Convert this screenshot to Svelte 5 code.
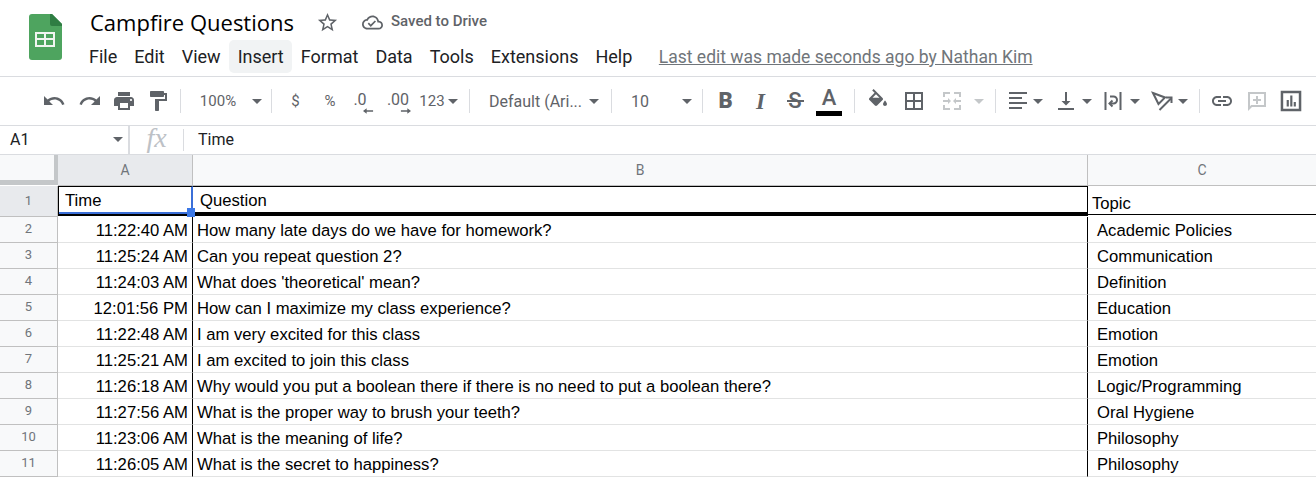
<script>
  const menus = ['File','Edit','View','Insert','Format','Data','Tools','Extensions','Help'];
  const rows = [
    ['11:22:40 AM','How many late days do we have for homework?','Academic Policies'],
    ['11:25:24 AM','Can you repeat question 2?','Communication'],
    ["11:24:03 AM","What does 'theoretical' mean?",'Definition'],
    ['12:01:56 PM','How can I maximize my class experience?','Education'],
    ['11:22:48 AM','I am very excited for this class','Emotion'],
    ['11:25:21 AM','I am excited to join this class','Emotion'],
    ['11:26:18 AM','Why would you put a boolean there if there is no need to put a boolean there?','Logic/Programming'],
    ['11:27:56 AM','What is the proper way to brush your teeth?','Oral Hygiene'],
    ['11:23:06 AM','What is the meaning of life?','Philosophy'],
    ['11:26:05 AM','What is the secret to happiness?','Philosophy']
  ];
</script>

{#snippet caret(dim = false)}
  <span class="caret" class:dim></span>
{/snippet}

<div class="page">
  <header class="top">
    <svg class="logo" viewBox="0 0 33 46" width="33" height="46">
      <path d="M3 0h20l10 10v33a3 3 0 0 1-3 3H3a3 3 0 0 1-3-3V3a3 3 0 0 1 3-3z" fill="#4ea45f"/>
      <path d="M21 0h2l10 10v2H23a2 2 0 0 1-2-2z" fill="#2f7d43"/>
      <path d="M6 18h20v15H6zm2 2v4h7v-4zm9 0v4h7v-4zM8 26v5h7v-5zm9 0v5h7v-5z" fill="#f1f5f1" fill-rule="evenodd"/>
    </svg>
    <div class="titles">
      <div class="titleline">
        <span class="title">Campfire Questions</span>
        <svg class="star" viewBox="0 0 24 24" width="23" height="23"><path fill="#5f6368" d="M22 9.240l-7.190-.62L12 2 9.190 8.630 2 9.240l5.460 4.730L5.820 21 12 17.270 18.180 21l-1.640-7.030L22 9.240zM12 15.400l-3.760 2.270 1-4.280-3.320-2.880 4.380-.38L12 6.100l1.710 4.040 4.380.38-3.320 2.880 1 4.280L12 15.400z"/></svg>
        <svg class="cloud" viewBox="0 0 24 24" width="21" height="21"><path fill="#5f6368" d="M19.350 10.040C18.670 6.590 15.640 4 12 4 9.110 4 6.600 5.640 5.350 8.040 2.340 8.360 0 10.910 0 14c0 3.310 2.690 6 6 6h13c2.760 0 5-2.240 5-5 0-2.640-2.050-4.780-4.650-4.960zM19 18H6c-2.210 0-4-1.790-4-4 0-2.050 1.530-3.760 3.560-3.970l1.070-.11.5-.95C8.080 7.140 9.940 6 12 6c2.620 0 4.880 1.860 5.390 4.430l.3 1.500 1.530.11c1.560.1 2.780 1.410 2.780 2.960 0 1.650-1.350 3-3 3zm-9-3.820l-2.090-2.090L6.500 13.500 10 17l6.010-6.010-1.410-1.410z"/></svg>
        <span class="saved">Saved to Drive</span>
      </div>
      <nav class="menu">
        {#each menus as m}
          <span class="mi" class:active={m === 'Insert'}>{m}</span>
        {/each}
        <span class="lastedit">Last edit was made seconds ago by Nathan Kim</span>
      </nav>
    </div>
  </header>

  <div class="toolbar">
    <span class="tb w36"><svg viewBox="0 0 24 24" width="24" height="24"><path d="M12.500 8c-2.650 0-5.050.99-6.900 2.600L2 7v9h9l-3.620-3.620c1.390-1.160 3.160-1.880 5.120-1.880 3.540 0 6.550 2.310 7.600 5.500l2.370-.78C21.080 11.030 17.150 8 12.500 8z"/></svg></span>
    <span class="tb w35"><svg viewBox="0 0 24 24" width="24" height="24"><path d="M18.400 10.600C16.550 8.990 14.150 8 11.500 8c-4.650 0-8.580 3.030-9.960 7.220L3.900 16c1.050-3.190 4.050-5.500 7.600-5.500 1.950 0 3.730.72 5.120 1.880L13 16h9V7l-3.600 3.600z"/></svg></span>
    <span class="tb w34"><svg viewBox="0 0 24 24" width="24" height="24"><path d="M19 8H5c-1.660 0-3 1.340-3 3v6h4v4h12v-4h4v-6c0-1.660-1.340-3-3-3zm-3 11H8v-5h8v5zm3-7c-.55 0-1-.45-1-1s.45-1 1-1 1 .45 1 1-.45 1-1 1zm-1-9H6v4h12V3z"/></svg></span>
    <span class="tb w34"><svg viewBox="0 0 24 24" width="24" height="24"><path d="M18 4V3c0-.55-.45-1-1-1H5c-.55 0-1 .45-1 1v4c0 .55.45 1 1 1h12c.55 0 1-.45 1-1V6h1v4H9v11c0 .55.45 1 1 1h2c.55 0 1-.45 1-1v-9h8V4h-3z"/></svg></span>
    <span class="sep sep-a"></span>
    <span class="tb txt zoom">100%</span>
    <span class="tb w14">{@render caret()}</span>
    <span class="sep sep-b"></span>
    <span class="tb w33 txt">$</span>
    <span class="tb w36 txt pct">%</span>
    <span class="tb w32 dec dec1">
      <span>.0</span>
      <svg viewBox="0 0 12 6" width="11" height="6"><path d="M11 2.200H4V0L0 3l4 3V3.800h7z"/></svg>
    </span>
    <span class="tb w36 dec dec2">
      <span>.00</span>
      <svg viewBox="0 0 12 6" width="11" height="6"><path d="M1 2.200h7V0l4 3-4 3V3.800H1z"/></svg>
    </span>
    <span class="tb w32 txt">123</span>
    <span class="tb w10">{@render caret()}</span>
    <span class="sep sep-c"></span>
    <span class="tb txt font">Default (Ari...</span>
    <span class="tb w26">{@render caret()}</span>
    <span class="sep sep-d"></span>
    <span class="tb txt size">10</span>
    <span class="tb w18">{@render caret()}</span>
    <span class="sep sep-e"></span>
    <span class="tb w35 glyph bold">B</span>
    <span class="tb w35 glyph ital">I</span>
    <span class="tb w34 glyph strike">S</span>
    <span class="tb w34 tcolor"><span class="glyph">A</span><i class="swatch"></i></span>
    <span class="sep sep-f"></span>
    <span class="tb w36"><svg viewBox="0 0 24 24" width="24" height="24"><path d="M16.560 8.940L7.620 0 6.210 1.410l2.380 2.380-5.150 5.150c-.59.59-.59 1.540 0 2.120l5.500 5.500c.29.29.68.44 1.060.44s.77-.15 1.060-.44l5.500-5.500c.59-.58.59-1.530 0-2.120zM19 11.500s-2 2.170-2 3.500c0 1.100.9 2 2 2s2-.9 2-2c0-1.330-2-3.500-2-3.500z"/><path fill="#fff" d="M10 5.210L6.500 8.700h7z"/></svg></span>
    <span class="tb w36"><svg viewBox="0 0 24 24" width="24" height="24"><path d="M3 3v18h18V3H3zm8 16H5v-6h6v6zm0-8H5V5h6v6zm8 8h-6v-6h6v6zm0-8h-6V5h6v6z"/></svg></span>
    <span class="tb w40"><svg viewBox="0 0 24 24" width="24" height="24" class="dimicon"><path d="M3 3h7v2H5v3H3zm11 0h7v5h-2V5h-5zM3 16h2v3h5v2H3zm16 0h2v5h-7v-2h5zM3 11h5V9l3 3-3 3v-2H3zm18 0h-5V9l-3 3 3 3v-2h5z"/></svg></span>
    <span class="tb w14">{@render caret(true)}</span>
    <span class="sep sep-g"></span>
    <span class="tb w24"><svg viewBox="0 0 24 24" width="24" height="24"><path d="M3 3h18v2H3zm0 5h13v2H3zm0 5h18v2H3zm0 5h13v2H3z"/></svg></span>
    <span class="tb w16">{@render caret()}</span>
    <span class="tb gap8 w24"><svg viewBox="0 0 24 24" width="24" height="24"><path d="M11 3h2v9h3.500L12 16.500 7.500 12H11zM4 19h16v2H4z"/></svg></span>
    <span class="tb w18">{@render caret()}</span>
    <span class="tb gap4 w24"><svg viewBox="0 0 24 24" width="24" height="24" class="strokeicon"><path d="M5.500 3v18M20.500 3v18"/><path d="M10 7.500h3.500a3.500 3.500 0 0 1 0 7H10"/><path d="M12.500 11.500L9.500 14.500l3 3"/></svg></span>
    <span class="tb gap3 w16">{@render caret()}</span>
    <span class="tb gap7 w24"><svg viewBox="0 0 24 24" width="24" height="24" class="strokeicon"><path d="M3 4l12 4.500L8.500 15z"/><path d="M9.500 21L21 9.500"/><path d="M16 8.500h5.500V14"/></svg></span>
    <span class="tb gap1 w16">{@render caret()}</span>
    <span class="sep sep-h"></span>
    <span class="tb w34"><svg viewBox="0 0 24 24" width="24" height="24"><path d="M3.900 12c0-1.710 1.390-3.100 3.100-3.100h4V7H7c-2.760 0-5 2.240-5 5s2.240 5 5 5h4v-1.900H7c-1.710 0-3.100-1.390-3.100-3.100zM8 13h8v-2H8v2zm9-6h-4v1.900h4c1.710 0 3.100 1.390 3.100 3.100s-1.390 3.100-3.100 3.100h-4V17h4c2.760 0 5-2.240 5-5s-2.240-5-5-5z"/></svg></span>
    <span class="tb w35"><svg viewBox="0 0 24 24" width="24" height="24" class="dimicon"><path d="M3 3h18v15H7l-4 4zm2 2v12.200L6.200 16H19V5zm6 2h2v3h3v2h-3v3h-2v-3H8v-2h3z"/></svg></span>
    <span class="tb w34"><svg viewBox="0 0 24 24" width="26" height="26"><path d="M21.500 2.500h-19v19h19zm-2.300 16.700H4.800V4.800h14.400zM8 11h2v6H8zm3.300-4h2v10h-2zM14.500 13h2v4h-2z"/></svg></span>
  </div>

  <div class="formula">
    <span class="namebox">A1 <span class="namecaret">{@render caret()}</span></span>
    <span class="fx">fx</span>
    <span class="fval">Time</span>
  </div>

  <div class="grid">
    <div class="corner"></div>
    <div class="ch sel">A</div>
    <div class="ch">B</div>
    <div class="ch last">C</div>

    <div class="rh first">1</div>
    <div class="cell h a1">Time<i class="handle"></i></div>
    <div class="cell h b1">Question</div>
    <div class="cell h c1">Topic</div>

    {#each rows as r, i}
      <div class="rh">{i + 2}</div>
      <div class="cell t">{r[0]}</div>
      <div class="cell q">{r[1]}</div>
      <div class="cell p">{r[2]}</div>
    {/each}
  </div>
</div>

<style>
  :global(body) { margin: 0; background: #fff; }
  .page { width: 1316px; height: 477px; overflow: hidden; font-family: Roboto, sans-serif; color: #202124; }

  .top { display: flex; height: 76px; border-bottom: 1px solid #dadce0; padding-left: 29px; }
  .logo { margin-top: 14px; flex: none; }
  .titles { margin-left: 18.500px; display: flex; flex-direction: column; }
  .titleline { display: flex; align-items: center; height: 40px; padding-left: 9.500px; }
  .title { font-family: "Open Sans", sans-serif; font-size: 22px; color: #000; margin-top: 3px; width: 204px; white-space: nowrap; }
  .star { margin: 5px 0 0 22px; }
  .cloud { margin: 5px 0 0 23px; }
  .saved { font-size: 15px; font-weight: 500; color: #5f6368; margin: 1px 0 0 8px; white-space: nowrap; }
  .menu { display: flex; align-items: center; height: 33px; font-size: 18px; color: #202124; }
  .mi { padding: 0 8.500px; height: 33px; line-height: 33px; border-radius: 5px; white-space: nowrap; }
  .mi.active { background: #f1f3f4; }
  .lastedit { margin-left: 18px; font-size: 17.500px; color: #70757a; text-decoration: underline; white-space: nowrap; }

  .toolbar { display: flex; align-items: stretch; height: 48px; padding-left: 36px; border-bottom: 1px solid #dadce0; }
  .tb { display: flex; align-items: center; justify-content: center; flex: none; position: relative; color: #5f6368; }
  .tb svg { fill: #5f6368; display: block; }
  .tb svg.dimicon { fill: #c4c7c9; }
  .tb svg.strokeicon { fill: none; stroke: #5f6368; stroke-width: 2; }
  .w10 { width: 10px; } .w14 { width: 14px; } .w16 { width: 16px; } .w18 { width: 18px; } .w24 { width: 24px; } .w26 { width: 26px; }
  .w32 { width: 32px; } .w33 { width: 33px; } .w34 { width: 34px; } .w35 { width: 35px; } .w36 { width: 36px; } .w40 { width: 40px; }
  .gap1 { margin-left: 1px; } .gap3 { margin-left: 3px; } .gap4 { margin-left: 4px; } .gap7 { margin-left: 7px; } .gap8 { margin-left: 8px; }
  .sep { flex: none; width: 1px; height: 24px; align-self: center; background: #dadce0; }
  .sep-a { margin: 0 5px; }
  .sep-b { margin: 0 7px; }
  .sep-c { margin: 0 12px 0 11px; }
  .sep-d { margin: 0 6px 0 4px; }
  .sep-e { margin: 0 5px 0 6px; }
  .sep-f { margin: 0 5px 0 8px; }
  .sep-g { margin: 0 10px 0 9px; }
  .sep-h { margin: 0 5px 0 8px; }
  .txt { font-size: 15px; color: #5f6368; white-space: nowrap; }
  .pct { font-size: 15px; }
  .zoom { width: 64px; }
  .font { width: 99px; justify-content: flex-start; padding-left: 7px; box-sizing: border-box; font-size: 16px; }
  .size { width: 60px; justify-content: flex-start; padding-left: 13px; box-sizing: border-box; font-size: 16px; }
  .dec { flex-direction: column; font-size: 16px; line-height: 15px; padding-top: 4px; box-sizing: border-box; }
  .dec1 span { margin-right: 8px; }
  .dec1 svg { margin: 1px 0 0 8px; }
  .dec2 svg { margin: 1px 0 0 15px; }
  .glyph { font-size: 22px; color: #5f6368; line-height: 1; }
  .bold { font-family: Roboto, sans-serif; font-weight: 900; }
  .ital { font-family: "Liberation Serif", serif; font-weight: 700; font-style: italic; font-size: 23px; }
  .strike { font-weight: 500; }
  .strike::after { content: ""; position: absolute; left: 8.500px; width: 17px; height: 2px; background: #5f6368; top: 23px; }
  .tcolor { flex-direction: column; justify-content: flex-start; padding-top: 10px; box-sizing: border-box; }
  .tcolor .glyph { font-weight: 500; }
  .swatch { width: 26px; height: 5px; background: #000; margin-top: 2px; display: block; }
  .caret { display: block; width: 0; height: 0; border-left: 5px solid transparent; border-right: 5px solid transparent; border-top: 5px solid #5f6368; }
  .caret.dim { border-top-color: #c4c7c9; }

  .formula { display: flex; align-items: center; height: 28px; border-bottom: 1px solid #dadce0; font-size: 16px; }
  .namebox { width: 113px; height: 26px; padding: 0 5px 2px 10px; display: flex; align-items: center; justify-content: space-between; border-right: 2px solid #dadce0; box-sizing: content-box; }
  .namecaret { display: block; }
  .fx { font-family: "Liberation Serif", serif; font-style: italic; font-size: 28px; color: #bdc1c6; width: 53px; text-align: center; border-right: 1px solid #dadce0; height: 22px; line-height: 18px; }
  .fval { margin-left: 14px; padding-bottom: 2px; color: #202124; }

  .grid { display: grid; grid-template-columns: 58px 135px 895px 228px; grid-template-rows: 31px 31px repeat(10, 26px); font-family: "Liberation Sans", Arial, sans-serif; font-size: 16.670px; color: #000; }
  .corner { background: #f8f9fa; border-right: 4px solid #c4c7c9; border-bottom: 5px solid #c4c7c9; margin-bottom: 1px; box-sizing: border-box; }
  .ch { background: #f8f9fa; border-right: 1px solid #c0c0c0; border-bottom: 1px solid #c0c0c0; display: flex; align-items: center; justify-content: center; color: #70757a; font-family: Roboto, sans-serif; font-size: 14px; box-sizing: border-box; }
  .ch.sel { background: #e8eaed; }
  .ch.last { border-right: 0; }
  .rh { background: #f8f9fa; border-right: 1px solid #c0c0c0; border-bottom: 1px solid #c0c0c0; display: flex; align-items: center; justify-content: center; padding-bottom: 3px; color: #70757a; font-family: Roboto, sans-serif; font-size: 13px; box-sizing: border-box; }
  .rh.first { background: #e8eaed; padding-bottom: 2px; }
  .cell { box-sizing: border-box; border-bottom: 1px solid #e2e3e3; display: flex; align-items: center; padding-top: 3px; white-space: nowrap; overflow: visible; }
  .t { justify-content: flex-end; padding-right: 4px; border-right: 1px solid #000; }
  .q { padding-left: 4px; border-right: 1px solid #000; }
  .p { padding-left: 9px; }
  .h { position: relative; }
  .a1 { border: 1px solid #000; border-bottom: 0; border-right: 2px solid #3b6fd8; box-shadow: inset 0 -2px 0 #3b6fd8; padding: 1px 0 0 6px; margin-bottom: 3px; background: #fff; height: 28px; }
  .a1::after { content: ""; position: absolute; left: -1px; right: -2px; bottom: -2px; height: 2px; background: #000; }
  .b1 { border-top: 1px solid #000; border-right: 1px solid #000; border-bottom: 4px solid #000; padding: 3px 0 0 7px; margin-bottom: 1px; }
  .c1 { border-bottom: 1px solid #000; padding: 0 0 0 4px; align-items: flex-end; margin-bottom: 2px; }
  .handle { position: absolute; z-index: 2; right: -4px; bottom: -3px; width: 8px; height: 9px; background: #3b78e7; box-sizing: content-box; }
</style>
